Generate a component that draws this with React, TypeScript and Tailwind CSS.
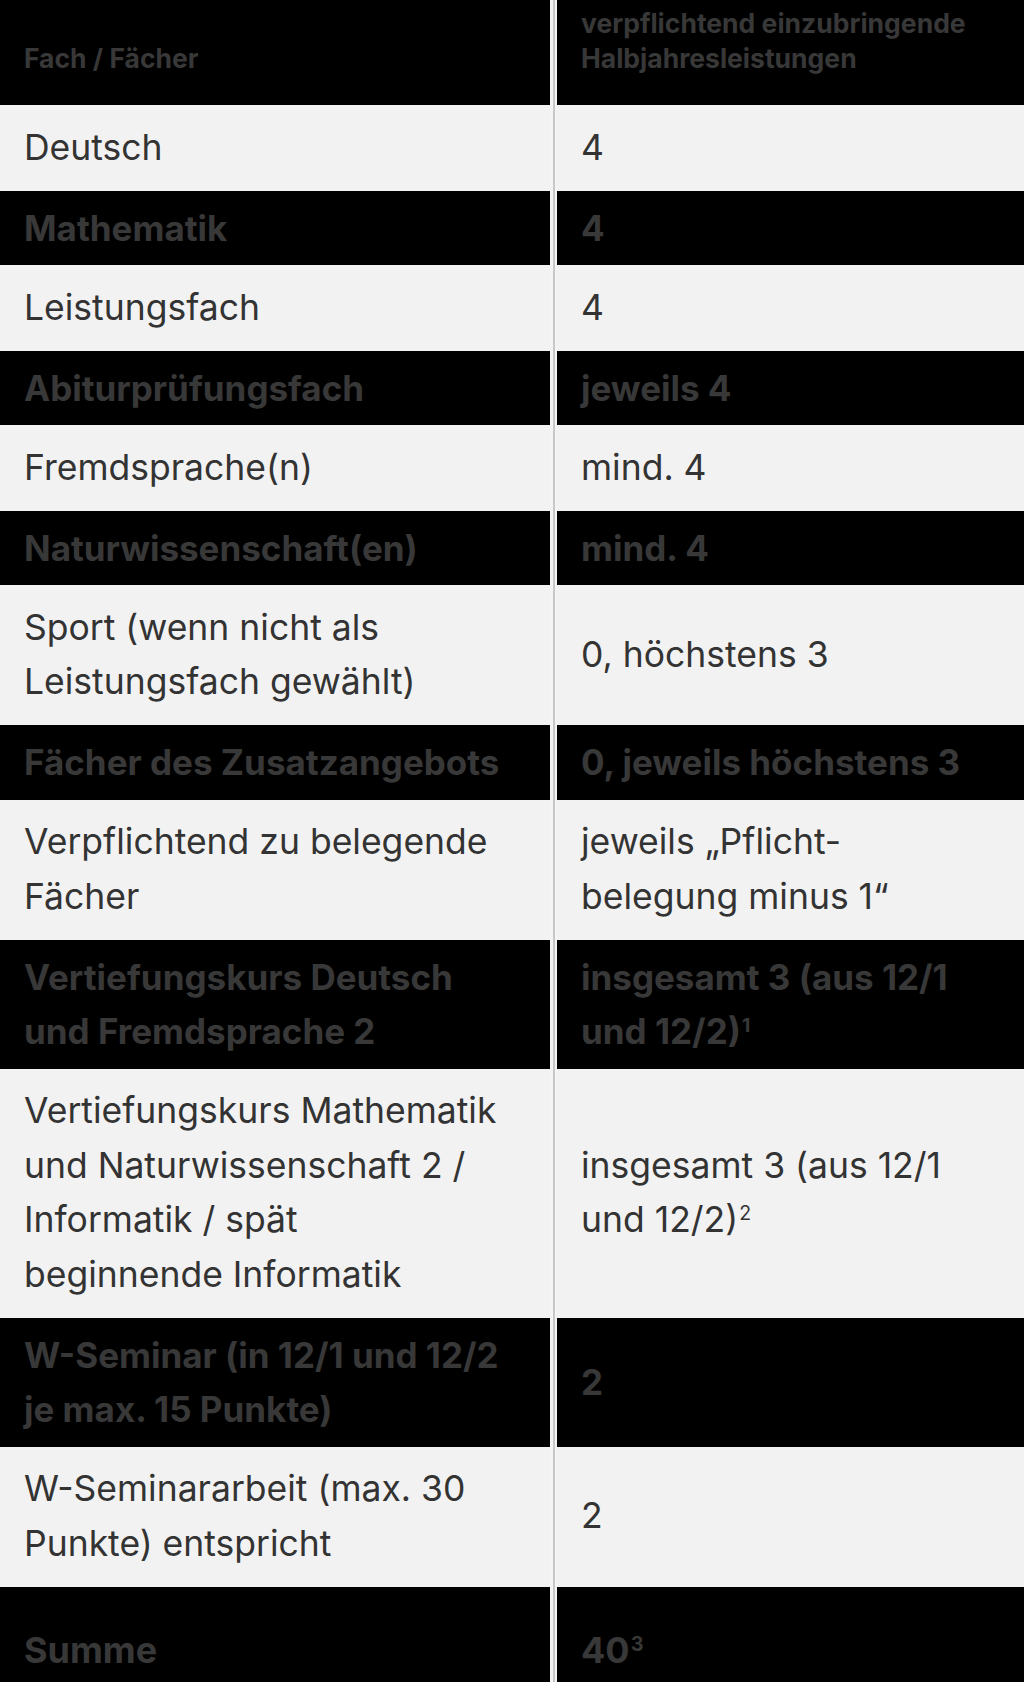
import React from 'react';

type Row = {
  subject: React.ReactNode;
  value: React.ReactNode;
  dark?: boolean;
};

// small raised footnote number
const Note: React.FC<{ n: string }> = ({ n }) => (
  <span className="align-[0.6em] text-[0.55em] leading-none pl-[1px]">{n}</span>
);

const rows: Row[] = [
  { subject: 'Deutsch', value: '4' },
  { subject: 'Mathematik', value: '4', dark: true },
  { subject: 'Leistungsfach', value: '4' },
  { subject: 'Abiturprüfungsfach', value: 'jeweils 4', dark: true },
  { subject: 'Fremdsprache(n)', value: 'mind. 4' },
  { subject: 'Naturwissenschaft(en)', value: 'mind. 4', dark: true },
  { subject: 'Sport (wenn nicht als Leistungsfach gewählt)', value: '0, höchstens 3' },
  { subject: 'Fächer des Zusatzangebots', value: '0, jeweils höchstens 3', dark: true },
  {
    subject: 'Verpflichtend zu belegende Fächer',
    value: (
      <>
        jeweils „Pflicht-
        <br />
        belegung minus 1“
      </>
    ),
  },
  {
    subject: 'Vertiefungskurs Deutsch und Fremdsprache 2',
    value: (
      <>
        insgesamt 3 (aus 12/1 und 12/2)
        <Note n="1" />
      </>
    ),
    dark: true,
  },
  {
    subject: 'Vertiefungskurs Mathematik und Naturwissenschaft 2 / Informatik / spät beginnende Informatik',
    value: (
      <>
        insgesamt 3 (aus 12/1 und 12/2)
        <Note n="2" />
      </>
    ),
  },
  { subject: 'W-Seminar (in 12/1 und 12/2 je max. 15 Punkte)', value: '2', dark: true },
  { subject: 'W-Seminararbeit (max. 30 Punkte) entspricht', value: '2' },
];

// thin light strip with a grey rule in the middle, same in every row
const Divider = () => (
  <div className="w-[7px] shrink-0 flex justify-center bg-[#f4f4f4]">
    <div className="w-[2px] bg-[#c8c8c8]" />
  </div>
);

const TableRow: React.FC<{ row: Row }> = ({ row }) => {
  const cell = row.dark
    ? 'bg-black text-[#383838] font-bold text-[35px] py-[10px]'
    : 'bg-[#f2f2f2] text-[#333333] text-[35.5px] py-[15.5px]';
  return (
    <div className="flex">
      <div className={`w-[550px] shrink-0 flex items-center pl-6 pr-12 ${cell}`}>
        <span>{row.subject}</span>
      </div>
      <Divider />
      <div className={`flex-1 flex items-center pl-6 pr-12 ${cell}`}>
        <span>{row.value}</span>
      </div>
    </div>
  );
};

export default function App() {
  return (
    <div
      className="w-[1024px] bg-white leading-[54.5px]"
      style={{ fontFamily: 'Inter, "Noto Sans", sans-serif' }}
    >
      {/* header */}
      <div className="flex h-[105px] text-[26.5px] leading-[35px] font-bold text-[#383838]">
        <div className="w-[550px] shrink-0 bg-black flex items-end pl-6 pb-[29px]">
          Fach / Fächer
        </div>
        <Divider />
        <div className="flex-1 bg-black flex items-end pl-6 pb-[29px]">
          <span>
            verpflichtend einzubringende
            <br />
            Halbjahresleistungen
          </span>
        </div>
      </div>

      {rows.map((row, i) => (
        <TableRow key={i} row={row} />
      ))}

      {/* Summe */}
      <div className="flex text-[36px] font-bold text-[#383838]">
        <div className="w-[550px] shrink-0 bg-black flex items-center pl-6 h-[128px]">
          Summe
        </div>
        <Divider />
        <div className="flex-1 bg-black flex items-center pl-6 h-[128px]">
          <span>
            40
            <Note n="3" />
          </span>
        </div>
      </div>
    </div>
  );
}
